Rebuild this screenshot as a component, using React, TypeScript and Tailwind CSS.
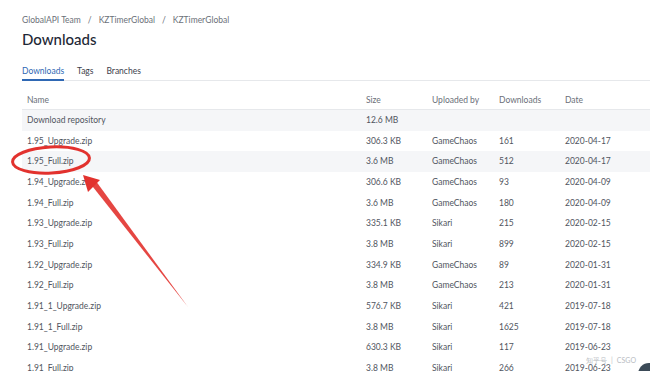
const rows = [
  { name: "Download repository", size: "12.6 MB", by: "", dl: "", date: "" },
  { name: "1.95_Upgrade.zip", size: "306.3 KB", by: "GameChaos", dl: "161", date: "2020-04-17" },
  { name: "1.95_Full.zip", size: "3.6 MB", by: "GameChaos", dl: "512", date: "2020-04-17" },
  { name: "1.94_Upgrade.zip", size: "306.6 KB", by: "GameChaos", dl: "93", date: "2020-04-09" },
  { name: "1.94_Full.zip", size: "3.6 MB", by: "GameChaos", dl: "180", date: "2020-04-09" },
  { name: "1.93_Upgrade.zip", size: "335.1 KB", by: "Sikari", dl: "215", date: "2020-02-15" },
  { name: "1.93_Full.zip", size: "3.8 MB", by: "Sikari", dl: "899", date: "2020-02-15" },
  { name: "1.92_Upgrade.zip", size: "334.9 KB", by: "GameChaos", dl: "89", date: "2020-01-31" },
  { name: "1.92_Full.zip", size: "3.8 MB", by: "GameChaos", dl: "213", date: "2020-01-31" },
  { name: "1.91_1_Upgrade.zip", size: "576.7 KB", by: "Sikari", dl: "421", date: "2019-07-18" },
  { name: "1.91_1_Full.zip", size: "3.8 MB", by: "Sikari", dl: "1625", date: "2019-07-18" },
  { name: "1.91_Upgrade.zip", size: "630.3 KB", by: "Sikari", dl: "117", date: "2019-06-23" },
  { name: "1.91_Full.zip", size: "3.8 MB", by: "Sikari", dl: "266", date: "2019-06-23" },
];

const cols = "grid grid-cols-[339px_66px_67px_66px_1fr]";

export default function App() {
  return (
    <div className="relative h-[371px] w-[650px] overflow-hidden bg-white font-['Lato','Liberation_Sans',sans-serif] text-[8.5px] text-[#505560]">
      <div className="pl-[22px] pt-[14px]">
        <div className="flex h-[12px] items-center gap-[7px] leading-[12px] text-[#6b7079]">
          <span>GlobalAPI Team</span>
          <span>/</span>
          <span>KZTimerGlobal</span>
          <span>/</span>
          <span>KZTimerGlobal</span>
        </div>
        <h1 className="mt-[3px] text-[15px] font-medium leading-[20px] text-[#1e2836]">Downloads</h1>
        <div className="mt-[16px] flex gap-[13px] border-b border-[#e6e8eb] leading-[12px] text-[#3b414b]">
          <span className="-mb-px border-b-2 border-[#2f68b4] pb-[2px] text-[#2f68b4]">Downloads</span>
          <span className="pb-[3px]">Tags</span>
          <span className="pb-[3px]">Branches</span>
        </div>
        <div className="mt-[9px]">
          <div className={`${cols} h-[20px] items-center border-b border-[#e6e8eb] pt-[2px] text-[#6b7079]`}>
            <span className="pl-[5px]">Name</span>
            <span className="pl-[5px]">Size</span>
            <span className="pl-[5px]">Uploaded by</span>
            <span className="pl-[5px]">Downloads</span>
            <span className="pl-[5px]">Date</span>
          </div>
          {rows.map((r, i) => (
            <div
              key={r.name}
              className={`${cols} h-[20.67px] items-center ${i === 0 || i === 2 ? "bg-[#f5f6f8]" : ""}`}
            >
              <span className="pl-[5px]">{r.name}</span>
              <span className="pl-[5px]">{r.size}</span>
              <span className="pl-[5px]">{r.by}</span>
              <span className="pl-[5px]">{r.dl}</span>
              <span className="pl-[5px]">{r.date}</span>
            </div>
          ))}
        </div>
      </div>

      <svg className="pointer-events-none absolute inset-0" width="650" height="371" viewBox="0 0 650 371">
        <ellipse cx="51" cy="160" rx="38.5" ry="13" transform="rotate(-3 51 160)" fill="none" stroke="#e2322e" strokeWidth="3" />
        <polygon points="188,307 91,184.5 95.5,180.5" fill="#e2322e" opacity="0.9" />
        <polygon points="83,175 100,180 88,192" fill="#e2322e" />
      </svg>

      <div className="absolute bottom-[6px] right-[14px] flex items-center gap-[4px] text-[7px] text-[#b8bcc2]">
        <span>知乎号</span>
        <span>|</span>
        <span>CSGO</span>
      </div>
      <div className="absolute -bottom-[14px] -right-[10px] h-[22px] w-[22px] rounded-full bg-[#3b4a57]" />
    </div>
  );
}
